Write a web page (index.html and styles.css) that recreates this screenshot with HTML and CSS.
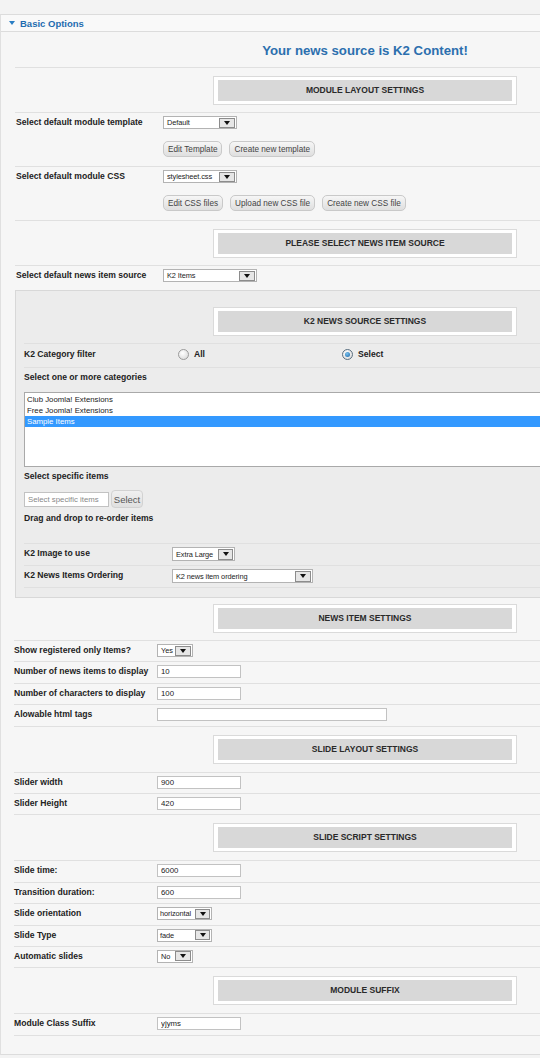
FILE: index.html
```html
<!DOCTYPE html>
<html lang="en">
<head>
    <meta charset="UTF-8">
    <meta name="viewport" content="width=device-width, initial-scale=1.0">
    <title>Basic Options</title>
    <link rel="stylesheet" href="styles.css">
</head>
<body>
    <main class="panel">
        <h3 class="panel-title"><span class="toggle"></span>Basic Options</h3>

        <div class="group group-top">
            <div class="source-note"><p>Your news source is K2 Content!</p></div>

            <div class="row-header"><h4 class="section-title"><span>MODULE LAYOUT SETTINGS</span></h4></div>

            <div class="row">
                <label>Select default module template</label>
                <div class="field">
                    <span class="select"><span>Default</span><span class="select-arrow"></span></span>
                    <div class="buttons">
                        <button type="button">Edit Template</button>
                        <button type="button">Create new template</button>
                    </div>
                </div>
            </div>

            <div class="row">
                <label>Select default module CSS</label>
                <div class="field">
                    <span class="select"><span>stylesheet.css</span><span class="select-arrow"></span></span>
                    <div class="buttons">
                        <button type="button">Edit CSS files</button>
                        <button type="button">Upload new CSS file</button>
                        <button type="button">Create new CSS file</button>
                    </div>
                </div>
            </div>

            <div class="row-header"><h4 class="section-title"><span>PLEASE SELECT NEWS ITEM SOURCE</span></h4></div>

            <div class="row row-open">
                <label>Select default news item source</label>
                <div class="field">
                    <span class="select select-wide"><span>K2 Items</span><span class="select-arrow"></span></span>
                </div>
            </div>

            <div class="source-box">
                <div class="row-header row-header-first"><h4 class="section-title"><span>K2 NEWS SOURCE SETTINGS</span></h4></div>

                <div class="row row-radio">
                    <label>K2 Category filter</label>
                    <div class="radios">
                        <label class="radio"><span class="radio-dot"></span>All</label>
                        <label class="radio"><span class="radio-dot checked"></span>Select</label>
                    </div>
                </div>

                <div class="row-stack">
                    <label>Select one or more categories</label>
                    <ul class="listbox">
                        <li>Club Joomla! Extensions</li>
                        <li>Free Joomla! Extensions</li>
                        <li class="selected">Sample Items</li>
                    </ul>
                    <label class="stack-label">Select specific items</label>
                    <div class="search">
                        <input type="text" class="input input-search" placeholder="Select specific items">
                        <button type="button" class="search-button">Select</button>
                    </div>
                    <label class="stack-label">Drag and drop to re-order items</label>
                </div>

                <div class="row row-box">
                    <label>K2 Image to use</label>
                    <div class="field">
                        <span class="select select-tall select-image"><span>Extra Large</span><span class="select-arrow"></span></span>
                    </div>
                </div>

                <div class="row row-box">
                    <label>K2 News Items Ordering</label>
                    <div class="field">
                        <span class="select select-tall select-order"><span>K2 news item ordering</span><span class="select-arrow"></span></span>
                    </div>
                </div>
            </div>
        </div>

        <div class="group group-bottom">
            <div class="row-header row-header-after-box"><h4 class="section-title"><span>NEWS ITEM SETTINGS</span></h4></div>

            <div class="row">
                <label>Show registered only Items?</label>
                <div class="field"><span class="select select-tiny"><span>Yes</span><span class="select-arrow"></span></span></div>
            </div>
            <div class="row">
                <label>Number of news items to display</label>
                <div class="field"><input type="text" class="input" value="10"></div>
            </div>
            <div class="row">
                <label>Number of characters to display</label>
                <div class="field"><input type="text" class="input" value="100"></div>
            </div>
            <div class="row">
                <label>Alowable html tags</label>
                <div class="field"><input type="text" class="input input-long" value=""></div>
            </div>

            <div class="row-header"><h4 class="section-title"><span>SLIDE LAYOUT SETTINGS</span></h4></div>

            <div class="row">
                <label>Slider width</label>
                <div class="field"><input type="text" class="input" value="900"></div>
            </div>
            <div class="row">
                <label>Slider Height</label>
                <div class="field"><input type="text" class="input" value="420"></div>
            </div>

            <div class="row-header"><h4 class="section-title"><span>SLIDE SCRIPT SETTINGS</span></h4></div>

            <div class="row">
                <label>Slide time:</label>
                <div class="field"><input type="text" class="input" value="6000"></div>
            </div>
            <div class="row">
                <label>Transition duration:</label>
                <div class="field"><input type="text" class="input" value="600"></div>
            </div>
            <div class="row">
                <label>Slide orientation</label>
                <div class="field"><span class="select select-short"><span>horizontal</span><span class="select-arrow"></span></span></div>
            </div>
            <div class="row">
                <label>Slide Type</label>
                <div class="field"><span class="select select-short"><span>fade</span><span class="select-arrow"></span></span></div>
            </div>
            <div class="row">
                <label>Automatic slides</label>
                <div class="field"><span class="select select-tiny"><span>No</span><span class="select-arrow"></span></span></div>
            </div>

            <div class="row-header"><h4 class="section-title"><span>MODULE SUFFIX</span></h4></div>

            <div class="row">
                <label>Module Class Suffix</label>
                <div class="field"><input type="text" class="input" value="yjyms"></div>
            </div>
        </div>
    </main>
</body>
</html>
```

FILE: styles.css
```css
* {
    margin: 0;
    padding: 0;
    box-sizing: border-box;
}
html, body {
    width: 100%;
}
body {
    padding-top: 14px;
    background-color: #f3f3f3;
    font-family: "Liberation Sans", Arial, sans-serif;
    color: #222;
}
.panel {
    background-color: #f6f6f6;
    border-top: 1px solid #dcdcdc;
    border-bottom: 1px solid #dcdcdc;
    border-left: 1px solid #e0e0e0;
    padding-bottom: 18px;
}
.panel-title {
    display: flex;
    align-items: center;
    gap: 5px;
    height: 17px;
    padding-left: 8px;
    border-bottom: 1px solid #dcdcdc;
    background-color: #f9f9f9;
    font-size: 9.5px;
    color: #1f6cb0;
}
.toggle {
    border-top: 4px solid #2a7ec4;
    border-left: 3px solid transparent;
    border-right: 3px solid transparent;
}

/* groups of rows */
.group {
    --label: 143px;
}
.group-top {
    --label: 148px;
    margin-left: 14px;
}
.group-top > .row > label {
    padding-left: 1px;
}
.group-bottom {
    margin-left: 13px;
}
.group-bottom .row {
    padding-bottom: 4.4px;
}
.group-bottom .row-header {
    padding-bottom: 8px;
}
.group-bottom .row-header-after-box {
    padding: 6px 23px 7px 0;
}
.source-note {
    display: flex;
    justify-content: flex-end;
    padding: 12px 23px 9px 0;
    border-bottom: 1px solid #e0e0e0;
}
.source-note p {
    width: 304px;
    text-align: center;
    font-size: 13.2px;
    line-height: 14px;
    font-weight: bold;
    color: #2c6fae;
}
.row-header {
    display: flex;
    justify-content: flex-end;
    padding: 8px 23px 7px 0;
    border-bottom: 1px solid #e0e0e0;
}
.row-header-first {
    padding-top: 16px;
}
.section-title {
    width: 304px;
    padding: 3px 4px;
    background-color: #fff;
    border: 1px solid #dadada;
}
.section-title span {
    display: block;
    height: 21px;
    line-height: 21px;
    text-align: center;
    background-color: #d8d8d8;
    font-size: 8.5px;
    color: #2a2a2a;
}
.row {
    display: grid;
    grid-template-columns: var(--label) 1fr;
    padding: 3px 0 4px;
    border-bottom: 1px solid #e0e0e0;
}
.row > label, .row-stack > label {
    display: block;
    font-size: 8.6px;
    line-height: 13px;
    font-weight: bold;
    color: #222;
}
.row-open {
    border-bottom: none;
    padding-bottom: 8px;
}
.field {
    display: flex;
    flex-direction: column;
    align-items: flex-start;
}
.buttons {
    display: flex;
    gap: 7px;
    margin-top: 12px;
    margin-bottom: 5px;
}
.buttons button {
    height: 16px;
    padding: 0 4px;
    border: 1px solid #c9c9c9;
    border-radius: 5px;
    background: linear-gradient(#f6f6f6, #dfdfdf);
    font-family: "Liberation Sans", Arial, sans-serif;
    font-size: 8.2px;
    color: #444;
}

/* fake select boxes */
.select {
    display: inline-flex;
    align-items: center;
    justify-content: space-between;
    gap: 1px;
    width: 74px;
    height: 13px;
    padding: 0 1px 0 3px;
    border: 1px solid #b3b3b3;
    background-color: #fff;
    font-size: 7.4px;
    letter-spacing: -0.1px;
    color: #222;
    white-space: nowrap;
}
.select-arrow {
    display: flex;
    flex-shrink: 0;
    align-items: center;
    justify-content: center;
    width: 16px;
    height: 10px;
    border: 1px solid #8c8c8c;
    background-color: #e6e6e6;
}
.select-arrow::after {
    content: "";
    border-top: 4px solid #111;
    border-left: 3px solid transparent;
    border-right: 3px solid transparent;
}
.select-tall {
    height: 14px;
}
.select-tall .select-arrow {
    height: 11px;
}
.select-wide { width: 94px; }
.select-image { width: 63px; }
.select-order { width: 141px; }
.select-tiny { width: 36px; }
.select-short { width: 55px; padding-left: 2px; }
.select-short .select-arrow, .select-image .select-arrow { width: 15px; }

.input {
    width: 84px;
    height: 13px;
    padding: 0 3px;
    border: 1px solid #c2c2c2;
    background-color: #fff;
    font-family: "Liberation Sans", Arial, sans-serif;
    font-size: 7.8px;
    color: #222;
}
.input-long {
    width: 230px;
}

/* K2 source box */
.source-box {
    padding: 0 0 9px 8px;
    border-top: 1px solid #d8d8d8;
    border-left: 1px solid #d8d8d8;
    border-bottom: 1px solid #d8d8d8;
    background-color: #ececec;
}
.row-box {
    padding-bottom: 4px;
    min-height: 22px;
}
.row-radio {
    padding: 4px 0 6px;
}
.radios {
    display: grid;
    grid-template-columns: 164px 1fr;
}
.radio {
    display: flex;
    align-items: center;
    gap: 5px;
    padding-left: 6px;
    font-size: 8.6px;
    line-height: 13px;
    font-weight: bold;
    color: #222;
}
.radio-dot {
    display: flex;
    align-items: center;
    justify-content: center;
    width: 11px;
    height: 11px;
    border: 1px solid #9a9a9a;
    border-radius: 50%;
    background: radial-gradient(circle at 40% 35%, #ffffff, #d4d4d4);
}
.radio-dot.checked {
    border-color: #5a6f80;
}
.radio-dot.checked::after {
    content: "";
    width: 5px;
    height: 5px;
    border-radius: 50%;
    background: radial-gradient(circle at 40% 35%, #7cc2ee, #1565a8);
}
.row-stack {
    padding: 3px 0 18px;
    border-bottom: 1px solid #e0e0e0;
}
.listbox {
    list-style: none;
    height: 75px;
    margin-top: 8px;
    padding-top: 1px;
    border: 1px solid #a9a9a9;
    border-right: none;
    background-color: #fff;
}
.listbox li {
    height: 11px;
    line-height: 11px;
    padding-left: 2px;
    font-size: 7.8px;
    color: #222;
}
.listbox li.selected {
    background-color: #3399ff;
    color: #fff;
}
.stack-label {
    margin-top: 3px;
}
.search {
    display: flex;
    align-items: center;
    gap: 2px;
    margin: 7px 0 4px;
}
.input-search {
    width: 85px;
    height: 15px;
}
.input-search::placeholder {
    color: #888;
}
.search-button {
    height: 18px;
    width: 32px;
    border: 1px solid #d2d2d2;
    border-radius: 4px;
    background: linear-gradient(#f0f0f0, #e0e0e0);
    font-family: "Liberation Sans", Arial, sans-serif;
    font-size: 9.5px;
    color: #555;
}
.search + .stack-label {
    margin-top: 0;
}
```
